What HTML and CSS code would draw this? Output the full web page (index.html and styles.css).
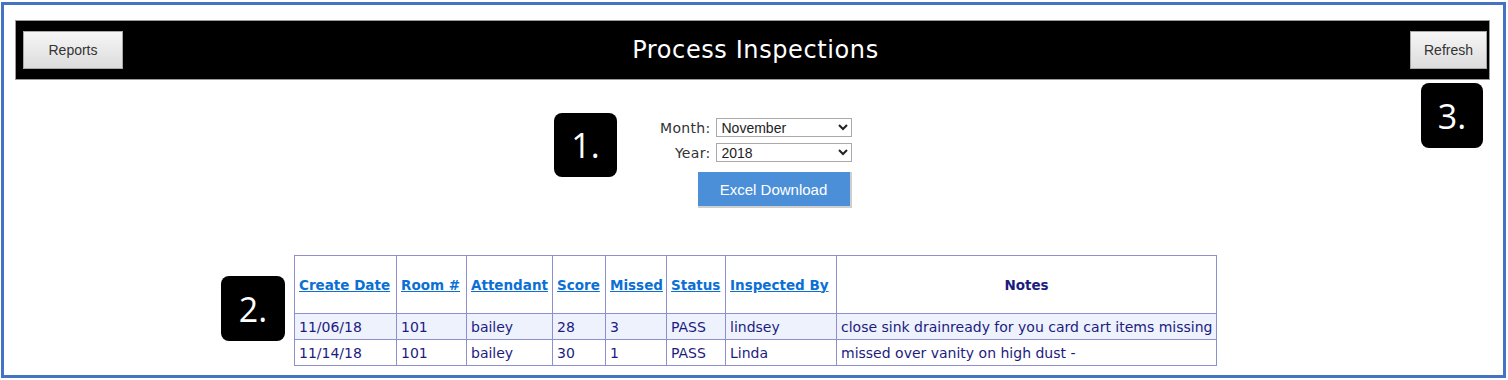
FILE: index.html
```html
<!DOCTYPE html>
<html>
<head>
    <meta charset="UTF-8">
    <title>Process Inspections</title>
    <link rel="stylesheet" href="styles.css">
</head>
<body>
<div id="frame">
    <div id="topbar">
        <div class="bar_l"><button class="nav_btn">Reports</button></div>
        <h1 id="title">Process Inspections</h1>
        <div class="bar_r"><button class="nav_btn">Refresh</button></div>
    </div>

    <div id="content">
        <div id="filters">
            <div class="f_row">
                <label for="month">Month:</label>
                <select id="month">
                    <option>November</option>
                </select>
            </div>
            <div class="f_row">
                <label for="year">Year:</label>
                <select id="year">
                    <option>2018</option>
                </select>
            </div>
            <button id="excel">Excel Download</button>
        </div>

        <table id="grid">
            <colgroup>
                <col class="w_date">
                <col class="w_room">
                <col class="w_att">
                <col class="w_score">
                <col class="w_missed">
                <col class="w_status">
                <col class="w_by">
                <col class="w_notes">
            </colgroup>
            <tr>
                <th><a href="#">Create Date</a></th>
                <th><a href="#">Room #</a></th>
                <th><a href="#">Attendant</a></th>
                <th><a href="#">Score</a></th>
                <th><a href="#">Missed</a></th>
                <th><a href="#">Status</a></th>
                <th><a href="#">Inspected By</a></th>
                <th class="notes_h">Notes</th>
            </tr>
            <tr class="alt">
                <td>11/06/18</td>
                <td>101</td>
                <td>bailey</td>
                <td>28</td>
                <td>3</td>
                <td>PASS</td>
                <td>lindsey</td>
                <td>close sink drainready for you card cart items missing</td>
            </tr>
            <tr>
                <td>11/14/18</td>
                <td>101</td>
                <td>bailey</td>
                <td>30</td>
                <td>1</td>
                <td>PASS</td>
                <td>Linda</td>
                <td>missed over vanity on high dust -</td>
            </tr>
        </table>
    </div>

    <!-- callout numbers laid over the screenshot -->
    <div class="callout c1">1.</div>
    <div class="callout c2">2.</div>
    <div class="callout c3">3.</div>
</div>
</body>
</html>
```

FILE: styles.css
```css
body {
    margin: 2px 1px;
    background-color: #ffffff;
}

#frame {
    position: relative;
    box-sizing: border-box;
    width: 1505px;
    height: 376px;
    border: 3px solid #4472C4;
    padding: 15px 13px 0px 11px;
}

#topbar {
    display: grid;
    grid-template-columns: 1fr auto 1fr;
    align-items: center;
    height: 58px;
    background-color: #000000;
    border: 1px solid #9a9a9a;
}

.bar_l {
    padding-left: 7px;
}

.bar_r {
    display: flex;
    justify-content: flex-end;
    padding-right: 2px;
}

.nav_btn {
    height: 38px;
    padding: 0px;
    font-family: "Liberation Sans", Arial, sans-serif;
    font-size: 14px;
    color: #333333;
    border: 1px solid #a8a8a8;
    background: linear-gradient(#f6f6f6, #dcdcdc);
}

.bar_l .nav_btn {
    width: 100px;
}

.bar_r .nav_btn {
    width: 77px;
}

#title {
    margin: 0px;
    padding-left: 6px;
    font-family: "DejaVu Sans", Verdana, sans-serif;
    font-weight: normal;
    font-size: 24px;
    letter-spacing: 0.6px;
    color: #ffffff;
}

#content {
    padding-left: 6px;
}

#filters {
    display: flex;
    flex-direction: column;
    align-items: flex-end;
    width: 192px;
    margin: 38px auto 0px;
}

.f_row {
    display: flex;
    align-items: center;
    gap: 5px;
    margin-bottom: 6px;
}

.f_row label {
    font-family: "DejaVu Sans", Verdana, sans-serif;
    font-size: 14px;
    letter-spacing: 0.3px;
    color: #333333;
}

.f_row select {
    width: 136px;
    height: 19px;
    padding: 0px 0px 0px 1px;
    font-family: "Liberation Sans", Arial, sans-serif;
    font-size: 14px;
    color: #222222;
    border: 1px solid #a9a9a9;
    background-color: #ffffff;
}

#excel {
    width: 154px;
    height: 36px;
    margin-top: 4px;
    font-family: "Liberation Sans", Arial, sans-serif;
    font-size: 15px;
    color: #ffffff;
    background-color: #4A8FD8;
    border: none;
    border-right: 2px solid #cfcfcf;
    border-bottom: 2px solid #cfcfcf;
}

#grid {
    table-layout: fixed;
    width: 922px;
    margin: 47px auto 0px;
    border-collapse: collapse;
    border: 1px solid #8f8fcb;
    font-family: "DejaVu Sans", Verdana, sans-serif;
    font-size: 14px;
    color: #1c1c80;
}

.w_date { width: 102px; }
.w_room { width: 70px; }
.w_att { width: 86px; }
.w_score { width: 53px; }
.w_missed { width: 61px; }
.w_status { width: 59px; }
.w_by { width: 111px; }
.w_notes { width: 380px; }

#grid th,
#grid td {
    border: 1px solid #8f8fcb;
    padding: 0px 4px;
    text-align: left;
    white-space: nowrap;
    overflow: hidden;
}

#grid th {
    height: 57px;
    font-size: 13.5px;
    font-weight: bold;
}

#grid th a {
    color: #0b6fd3;
    text-decoration: underline;
}

#grid th.notes_h {
    text-align: center;
    color: #1c1c80;
}

#grid td {
    height: 25px;
}

#grid tr.alt td {
    background-color: #eef2fc;
}

.callout {
    position: absolute;
    display: flex;
    align-items: center;
    justify-content: center;
    border-radius: 8px;
    background-color: #000000;
    color: #ffffff;
    font-family: "Open Sans", sans-serif;
    font-size: 34px;
}

.c1 { left: 550px; top: 108px; width: 63px; height: 64px; }
.c2 { left: 217px; top: 271px; width: 64px; height: 65px; }
.c3 { left: 1417px; top: 78px; width: 62px; height: 65px; }
```
